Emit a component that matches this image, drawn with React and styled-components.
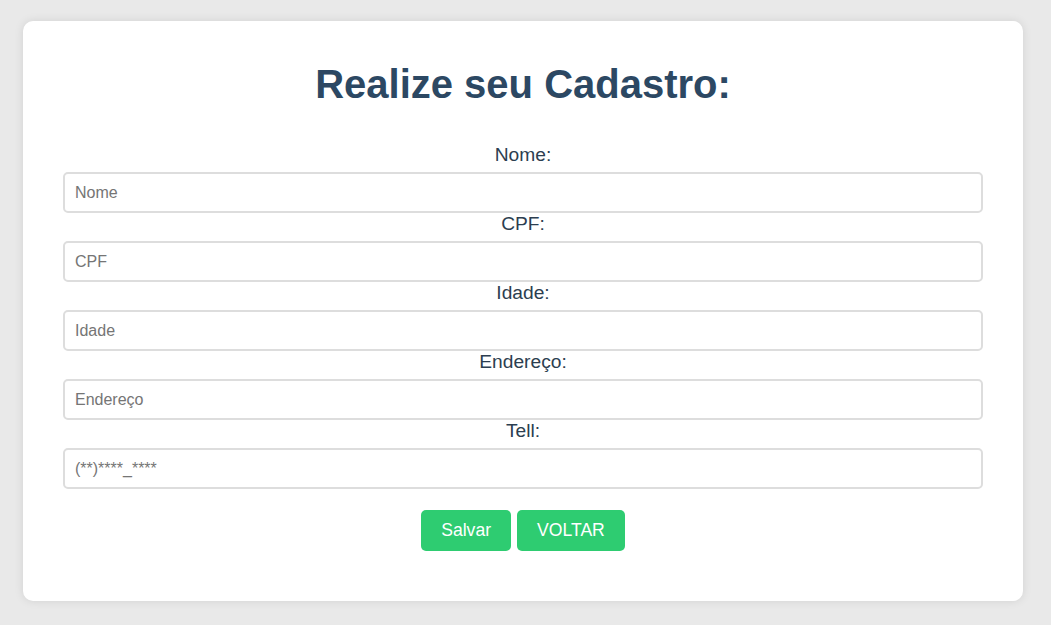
import React from "react";
import styled, { createGlobalStyle } from "styled-components";

const Global = createGlobalStyle`
  html, body {
    margin: 0;
    padding: 0;
    background: #e9e9e9;
    font-family: "Liberation Sans", Arial, sans-serif;
  }
  * { box-sizing: border-box; }
`;

const Page = styled.div`
  padding: 21px 0 24px 23px;
`;

const Card = styled.div`
  width: 1000px;
  height: 580px;
  background: #fff;
  border-radius: 10px;
  box-shadow: 0 0 10px rgba(0, 0, 0, 0.1);
  padding: 40px;
`;

const Title = styled.h1`
  margin: 0 0 37px;
  font-size: 40px;
  font-weight: bold;
  line-height: 46px;
  text-align: center;
  color: #2c4863;
`;

const Form = styled.form`
  display: flex;
  flex-direction: column;
`;

const Label = styled.label`
  display: block;
  font-size: 19.2px;
  line-height: 22px;
  color: #2c3e50;
  text-align: center;
  margin-bottom: 6px;
`;

const Input = styled.input`
  display: block;
  width: 100%;
  height: 41px;
  padding: 0 10px;
  border: 2px solid #ddd;
  border-radius: 5px;
  font-family: "Liberation Sans", Arial, sans-serif;
  font-size: 16px;
  color: #333;
  background: #fff;
  outline: none;
  &::placeholder {
    color: #757575;
  }
`;

const Buttons = styled.div`
  display: flex;
  justify-content: center;
  gap: 6px;
  margin-top: 21px;
`;

const Button = styled.button`
  height: 41px;
  padding: 0 20px;
  border: none;
  border-radius: 5px;
  background: #2ecc71;
  color: #fff;
  font-family: "Liberation Sans", Arial, sans-serif;
  font-size: 17.6px;
  cursor: pointer;
`;

const fields = [
  { label: "Nome:", placeholder: "Nome" },
  { label: "CPF:", placeholder: "CPF" },
  { label: "Idade:", placeholder: "Idade" },
  { label: "Endereço:", placeholder: "Endereço" },
  { label: "Tell:", placeholder: "(**)****_****" },
];

export default function App() {
  return (
    <>
      <Global />
      <Page>
        <Card>
          <Title>Realize seu Cadastro:</Title>
          <Form onSubmit={(e) => e.preventDefault()}>
            {fields.map((f) => (
              <React.Fragment key={f.label}>
                <Label>{f.label}</Label>
                <Input placeholder={f.placeholder} />
              </React.Fragment>
            ))}
            <Buttons>
              <Button type="submit">Salvar</Button>
              <Button type="button">VOLTAR</Button>
            </Buttons>
          </Form>
        </Card>
      </Page>
    </>
  );
}
